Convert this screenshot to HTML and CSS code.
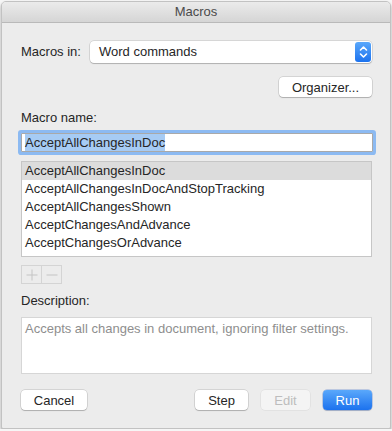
FILE: index.html
```html
<!DOCTYPE html>
<html lang="en">
<head>
    <meta charset="UTF-8">
    <title>Macros</title>
    <link rel="stylesheet" href="styles.css">
</head>
<body>

    <div class="window">
        <div class="titlebar">Macros</div>

        <div class="content">
            <div class="row macros-in">
                <span class="label">Macros in:</span>
                <div class="popup">
                    <span>Word commands</span>
                    <span class="stepper">
                        <svg width="9" height="14" viewBox="0 0 9 14">
                            <path d="M1.5 5 L4.5 2 L7.5 5 M1.5 9 L4.5 12 L7.5 9" fill="none" stroke="#fff" stroke-width="1.6" stroke-linecap="round" stroke-linejoin="round"/>
                        </svg>
                    </span>
                </div>
            </div>

            <div class="row right">
                <button class="button organizer">Organizer...</button>
            </div>

            <div class="label name-label">Macro name:</div>
            <div class="field">
                <span class="selected-text">AcceptAllChangesInDoc</span>
            </div>

            <ul class="list">
                <li class="active">AcceptAllChangesInDoc</li>
                <li>AcceptAllChangesInDocAndStopTracking</li>
                <li>AcceptAllChangesShown</li>
                <li>AcceptChangesAndAdvance</li>
                <li>AcceptChangesOrAdvance</li>
            </ul>

            <div class="plus-minus">
                <span class="pm">
                    <svg width="12" height="12" viewBox="0 0 12 12"><path d="M6 0.5 V11.5 M0.5 6 H11.5" stroke="#c4c4c4" stroke-width="1"/></svg>
                </span>
                <span class="pm">
                    <svg width="12" height="12" viewBox="0 0 12 12"><path d="M0.5 6 H11.5" stroke="#c4c4c4" stroke-width="1"/></svg>
                </span>
            </div>

            <div class="label desc-label">Description:</div>
            <div class="description">Accepts all changes in document, ignoring filter settings.</div>

            <div class="row buttons">
                <button class="button cancel">Cancel</button>
                <div class="spacer"></div>
                <button class="button step">Step</button>
                <button class="button edit" disabled>Edit</button>
                <button class="button run">Run</button>
            </div>
        </div>
    </div>

</body>
</html>
```

FILE: styles.css
```css
body {
    margin: 0;
    padding: 0;
    background: #f6f6f6;
    font-family: 'Liberation Sans', Arial, sans-serif;
    font-size: 13px;
    color: #262626;
}

.window {
    width: 388px;
    height: 426px;
    margin: 1px 0 0 1px;
    border: 1px solid #c2c2c2;
    border-radius: 5px 5px 2px 2px;
    background: #ececec;
    box-shadow: 0 2px 3px rgba(0, 0, 0, 0.35);
    overflow: hidden;
}

.titlebar {
    height: 20px;
    line-height: 20px;
    text-align: center;
    color: #4a4a4a;
    background: linear-gradient(#ebebeb, #d5d5d5);
    border-bottom: 1px solid #b9b9b9;
}

.content {
    padding: 0 18px 0 19px;
}

.row {
    display: flex;
    align-items: center;
}

.right {
    justify-content: flex-end;
}

.label {
    color: #262626;
}

.macros-in {
    margin-top: 17px;
    height: 23px;
}

.macros-in .label {
    width: 69px;
}

.popup {
    flex: 1;
    height: 22px;
    display: flex;
    align-items: center;
    justify-content: space-between;
    background: #fff;
    border-radius: 4px;
    box-shadow: 0 0 0 0.5px rgba(0, 0, 0, 0.18), 0 1px 1px rgba(0, 0, 0, 0.18);
    padding-left: 9px;
}

.stepper {
    width: 16px;
    height: 20px;
    margin-right: 1px;
    border-radius: 3px;
    background: linear-gradient(#5aa8fb, #1c72ee);
    display: flex;
    align-items: center;
    justify-content: center;
}

.button {
    height: 20px;
    padding: 0;
    font-family: inherit;
    font-size: 13px;
    color: #262626;
    background: #fff;
    border: none;
    border-radius: 4px;
    box-shadow: 0 0 0 0.5px rgba(0, 0, 0, 0.2), 0 1px 1px rgba(0, 0, 0, 0.18);
}

.organizer {
    width: 93px;
    margin-top: 14px;
}

.name-label {
    margin-top: 12px;
    height: 17px;
    line-height: 17px;
}

.field {
    margin: 7px -1px 0 0;
    height: 17px;
    line-height: 17px;
    background: #fff;
    border: 1px solid #a9a9a9;
    border-radius: 1px;
    box-shadow: 0 0 0 3px #8cbaf2;
    padding-left: 3px;
}

.selected-text {
    background: #a6cbf4;
    padding: 1px 0;
}

.list {
    list-style: none;
    margin: 9px 0 0 0;
    padding: 0;
    height: 94px;
    background: #fff;
    border: 1px solid #c6c6c6;
}

.list li {
    height: 18px;
    line-height: 18px;
    padding-left: 3px;
}

.list li.active {
    background: #dcdcdc;
}

.plus-minus {
    display: flex;
    margin-top: 8px;
    width: 39px;
    height: 17px;
    border: 1px solid #d4d4d4;
}

.pm {
    flex: 1;
    display: flex;
    align-items: center;
    justify-content: center;
}

.pm + .pm {
    border-left: 1px solid #d4d4d4;
}

.desc-label {
    margin-top: 8px;
    height: 17px;
    line-height: 17px;
}

.description {
    margin-top: 8px;
    height: 52px;
    padding: 3px 0 0 3px;
    background: #fff;
    border: 1px solid #d6d6d6;
    color: #8e8e8e;
}

.buttons {
    margin-top: 16px;
}

.spacer {
    flex: 1;
}

.cancel {
    width: 66px;
}

.step {
    width: 53px;
}

.edit {
    width: 49px;
    margin-left: 13px;
    color: #bdbdbd;
    background: #f4f4f4;
    box-shadow: 0 0 0 0.5px rgba(0, 0, 0, 0.08);
}

.run {
    width: 49px;
    margin-left: 13px;
    color: #fff;
    background: linear-gradient(#5aa8fb, #1c72ee);
    box-shadow: 0 0 0 0.5px rgba(0, 60, 180, 0.4), 0 1px 1px rgba(0, 0, 0, 0.15);
}
```
